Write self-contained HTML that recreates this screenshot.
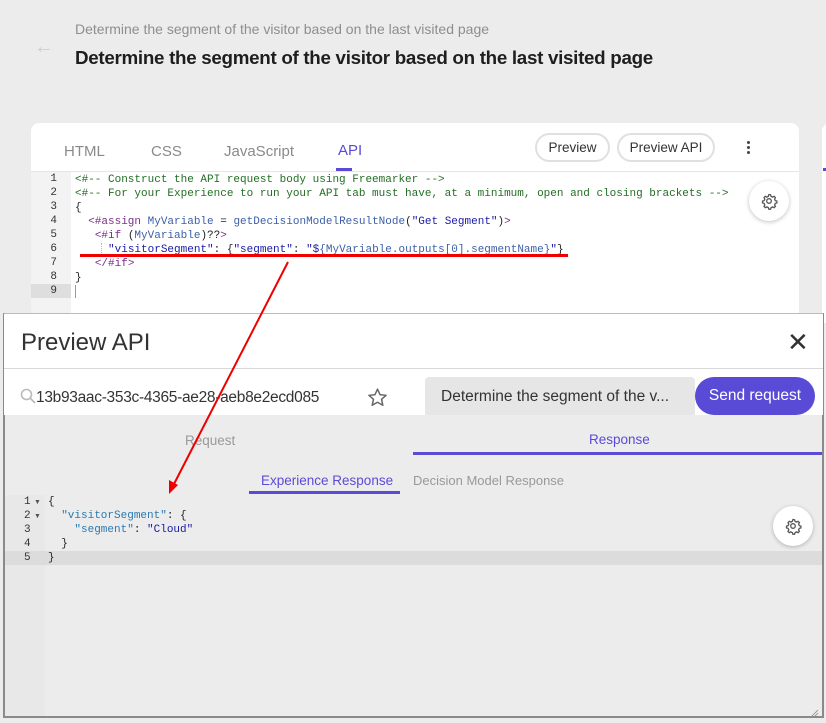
<!DOCTYPE html>
<html><head><meta charset="utf-8"><style>
*{box-sizing:border-box;margin:0;padding:0}
body{width:826px;height:723px;overflow:hidden;background:#ececec;font-family:"Liberation Sans",sans-serif;position:relative}
.abs{position:absolute}
.mono{font-family:"Liberation Mono",monospace;font-size:11px;line-height:14px;white-space:pre}
.cm{color:#236e24}.tg{color:#7a2f8a}.vr{color:#3c5fa8}.st{color:#1a1aa6}.key{color:#2a7ab0}
.gear{position:absolute;width:40px;height:40px;border-radius:50%;background:#fff;box-shadow:0 1px 4px rgba(0,0,0,.25)}
</style></head><body>
<div class="abs" style="left:34px;top:36px;color:#cfcfd3;font-size:20px">&#8592;</div>
<div class="abs" style="left:75px;top:21px;color:#8e8e8e;font-size:14px">Determine the segment of the visitor based on the last visited page</div>
<div class="abs" style="left:75px;top:47px;color:#1e1e1e;font-size:18.8px;font-weight:bold;letter-spacing:-0.3px">Determine the segment of the visitor based on the last visited page</div>

<div class="abs" style="left:31px;top:123px;width:768px;height:200px;background:#fff;border-radius:8px 8px 0 0"></div>
<div class="abs" style="left:822px;top:123px;width:10px;height:200px;background:#fff;border-radius:8px 0 0 0"></div>
<div class="abs" style="left:823px;top:168px;width:3px;height:3px;background:#5a4bd6"></div>
<div class="abs" style="left:64px;top:143px;font-size:15px;color:#8a8a8a">HTML</div>
<div class="abs" style="left:151px;top:143px;font-size:15px;color:#8a8a8a">CSS</div>
<div class="abs" style="left:224px;top:143px;font-size:15px;color:#8a8a8a">JavaScript</div>
<div class="abs" style="left:338px;top:142px;font-size:15px;color:#5a4bd6">API</div>
<div class="abs" style="left:336px;top:168px;width:16px;height:3px;background:#5a4bd6"></div>
<div class="abs" style="left:535px;top:133px;width:75px;height:29px;border:2px solid #e0e0e0;border-radius:15px;font-size:13.5px;color:#333;text-align:center;line-height:25px">Preview</div>
<div class="abs" style="left:617px;top:133px;width:98px;height:29px;border:2px solid #e0e0e0;border-radius:15px;font-size:13.5px;color:#333;text-align:center;line-height:25px">Preview API</div>
<div class="abs" style="left:747px;top:141px;width:3px;height:3px;background:#444;border-radius:50%;box-shadow:0 5px 0 #444,0 10px 0 #444"></div>
<div class="abs" style="left:31px;top:171px;width:768px;height:1px;background:#e6e6e6"></div>
<div class="abs" style="left:31px;top:172px;width:40px;height:151px;background:#f3f3f3"></div>
<div class="abs" style="left:31px;top:284px;width:40px;height:14px;background:#dedede"></div>
<div class="abs mono" style="left:31px;top:172px;width:26px;text-align:right;color:#333">1
2
3
4
5
6
7
8
9</div>
<div class="abs mono" style="left:75px;top:173px;color:#222"><span class="cm">&lt;#-- Construct the API request body using Freemarker --&gt;</span>
<span class="cm">&lt;#-- For your Experience to run your API tab must have, at a minimum, open and closing brackets --&gt;</span>
{
  <span class="tg">&lt;#assign</span> <span class="vr">MyVariable</span> = <span class="vr">getDecisionModelResultNode</span>(<span class="st">"Get Segment"</span>)<span class="tg">&gt;</span>
   <span class="tg">&lt;#if</span> (<span class="vr">MyVariable</span>)??<span class="tg">&gt;</span>
     <span class="st">"visitorSegment"</span>: {<span class="st">"segment"</span>: <span class="st">"$</span><span class="vr">{MyVariable.outputs[0].segmentName}</span><span class="st">"</span>}
   <span class="tg">&lt;/#if&gt;</span>
}
</div>
<div class="abs" style="left:101px;top:243px;width:0;height:14px;border-left:1px dotted #bbb"></div>
<div class="abs" style="left:75px;top:285px;width:1px;height:13px;background:#999"></div>
<div class="gear" style="left:749px;top:181px"></div>
<div class="abs" style="left:80px;top:254px;width:488px;height:3px;background:#e00"></div>

<div class="abs" style="left:3px;top:313px;width:821px;height:405px;background:#ececec;border:2px solid #8a8a8a;border-top:1px solid #bbb"></div>
<div class="abs" style="left:4px;top:314px;width:819px;height:101px;background:#fff"></div>
<div class="abs" style="left:4px;top:368px;width:819px;height:1px;background:#d8d8d8"></div>
<div class="abs" style="left:21px;top:329px;font-size:24px;color:#333">Preview API</div>
<div class="abs" style="left:787px;top:327px;font-size:26px;color:#333;line-height:30px">&#10005;</div>
<svg class="abs" style="left:20px;top:388px" width="16" height="16"><circle cx="6.5" cy="6.5" r="5" fill="none" stroke="#bbb" stroke-width="1.6"/><path d="M10 10l5 5" stroke="#bbb" stroke-width="1.8"/></svg>
<div class="abs" style="left:36px;top:389px;font-size:15.5px;color:#333;letter-spacing:-0.3px">13b93aac-353c-4365-ae28-aeb8e2ecd085</div>
<svg class="abs" style="left:367px;top:387px" width="21" height="21" viewBox="0 0 24 24"><path d="M12 2.5l2.9 6.3 6.9.7-5.2 4.6 1.5 6.8L12 17.4l-6.1 3.5 1.5-6.8-5.2-4.6 6.9-.7z" fill="none" stroke="#666" stroke-width="1.7" stroke-linejoin="round"/></svg>
<div class="abs" style="left:425px;top:377px;width:270px;height:38px;background:#e6e6e6;border-radius:4px 4px 0 0;font-size:15.5px;color:#333;padding:11px 0 0 16px;white-space:nowrap">Determine the segment of the v...</div>
<div class="abs" style="left:695px;top:377px;width:120px;height:38px;background:#5a4bd6;border-radius:19px;color:#fff;font-size:15.5px;text-align:center;line-height:38px">Send request</div>
<div class="abs" style="left:185px;top:433px;font-size:13.5px;color:#999">Request</div>
<div class="abs" style="left:589px;top:432px;font-size:13.5px;color:#5a4bd6">Response</div>
<div class="abs" style="left:413px;top:452px;width:409px;height:3px;background:#5a4bd6"></div>
<div class="abs" style="left:261px;top:473px;font-size:13.5px;color:#5a4bd6">Experience Response</div>
<div class="abs" style="left:413px;top:473px;font-size:13px;color:#999">Decision Model Response</div>
<div class="abs" style="left:249px;top:491px;width:151px;height:3px;background:#5a4bd6"></div>
<div class="abs" style="left:5px;top:495px;width:40px;height:221px;background:#e8e8e8"></div>
<div class="abs" style="left:5px;top:551px;width:817px;height:14px;background:#dcdcdc"></div>
<div class="abs mono" style="left:24px;top:495px;color:#333">1
2
3
4
5</div>
<div class="abs" style="left:34px;top:496px;font-size:7px;line-height:14px;color:#555">▼<br>▼</div>
<div class="abs mono" style="left:48px;top:495px;color:#222">{
  <span class="key">"visitorSegment"</span>: {
    <span class="key">"segment"</span>: <span class="st">"Cloud"</span>
  }
}</div>
<div class="gear" style="left:773px;top:506px"></div>
<svg class="abs" style="left:0;top:0" width="826" height="723"><line x1="288" y1="262" x2="174" y2="484" stroke="#e00" stroke-width="2"/><path d="M169 494l0-14 9 5z" fill="#e00"/>
<g fill="none" stroke="#555" stroke-width="1.3"><circle cx="769" cy="201" r="2.3"/><path d="M769 194.5l1.6.3.5 1.6 1.5.7 1.5-.8 1.3 1.3-.8 1.5.7 1.5 1.6.5v1.8l-1.6.5-.7 1.5.8 1.5-1.3 1.3-1.5-.8-1.5.7-.5 1.6h-1.8l-.5-1.6-1.5-.7-1.5.8-1.3-1.3.8-1.5-.7-1.5-1.6-.5v-1.8l1.6-.5.7-1.5-.8-1.5 1.3-1.3 1.5.8 1.5-.7.5-1.6z"/>
<circle cx="793" cy="526" r="2.3"/><path d="M793 519.5l1.6.3.5 1.6 1.5.7 1.5-.8 1.3 1.3-.8 1.5.7 1.5 1.6.5v1.8l-1.6.5-.7 1.5.8 1.5-1.3 1.3-1.5-.8-1.5.7-.5 1.6h-1.8l-.5-1.6-1.5-.7-1.5.8-1.3-1.3.8-1.5-.7-1.5-1.6-.5v-1.8l1.6-.5.7-1.5-.8-1.5 1.3-1.3 1.5.8 1.5-.7.5-1.6z"/></g>
<path d="M818 713l-5 5M818 716l-2 2M818 710l-8 8" stroke="#888" stroke-width="0.8"/></svg>
</body></html>
